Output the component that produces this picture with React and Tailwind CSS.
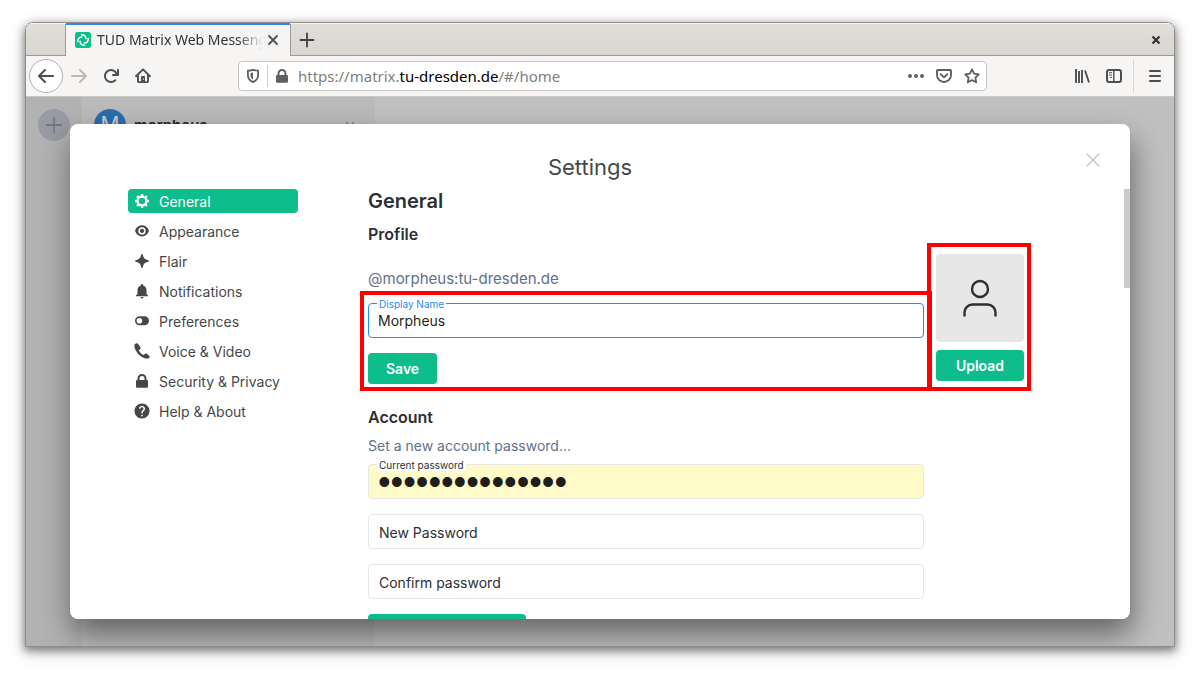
import React from "react";
import { MdHelp, MdNotifications } from "react-icons/md";
import { FaPhoneAlt } from "react-icons/fa";

function Glyph({ size = 16, children, className = "" }) {
  return (
    <svg
      width={size}
      height={size}
      viewBox="0 0 16 16"
      fill="currentColor"
      aria-hidden="true"
      className={`shrink-0 ${className}`}
    >
      {children}
    </svg>
  );
}

const arrowPath =
  "M15 7H3.414l4.293-4.293a1 1 0 0 0-1.414-1.414l-6 6a1 1 0 0 0 0 1.414l6 6a1 1 0 0 0 1.414-1.414L3.414 9H15a1 1 0 0 0 0-2z";

function Padlock({ className = "" }) {
  return (
    <Glyph className={className}>
      <path
        fillRule="evenodd"
        d="M3.5 7V5.5a4.5 4.5 0 0 1 9 0V7h.5a1 1 0 0 1 1 1v5.500a1.300 1.300 0 0 1-1.300 1.300H3.300A1.300 1.300 0 0 1 2 13.500V8a1 1 0 0 1 1-1zM5.500 7h5V5.500a2.500 2.500 0 0 0-5 0z"
      />
    </Glyph>
  );
}

function TabBar() {
  return (
    <div className="flex h-[33px] shrink-0 border-t border-t-[#f6f5f4] bg-linear-to-b from-[#e1deda] to-[#d9d5d0]">
      <div className="w-10 border-r border-b border-[#9c9a97]" />
      <div className="-mt-px flex w-[224px] items-center border-t-2 border-t-[#3584e4] bg-[#f6f5f4] pr-[11px] pb-0.5 pl-[9px]">
        <svg width="16" height="16" viewBox="0 0 16 16" fill="none" aria-hidden="true" className="shrink-0">
          <rect width="16" height="16" rx="2.5" fill="#0dbd8b" />
          <g stroke="#fff" strokeWidth="1.5" strokeLinecap="round">
            <path d="M6.500 2.700c2.600 0 4.500 1.600 4.500 4.100" />
            <path d="M13.300 6.500c0 2.600-1.600 4.500-4.100 4.500" />
            <path d="M9.500 13.300c-2.600 0-4.500-1.600-4.500-4.100" />
            <path d="M2.700 9.500c0-2.600 1.600-4.500 4.100-4.500" />
          </g>
        </svg>
        <span className="ml-1.5 flex-1 overflow-hidden mask-r-from-85% text-sm leading-5 whitespace-nowrap text-[#2e3436]">
          TUD Matrix Web Messenger
        </span>
        <button type="button" aria-label="Close tab" className="ml-1 text-[#4a4f51]">
          <svg width="12" height="12" viewBox="0 0 12 12" aria-hidden="true">
            <path d="M2 2l8 8M10 2l-8 8" stroke="currentColor" strokeWidth="1.8" strokeLinecap="round" />
          </svg>
        </button>
      </div>
      <div className="flex flex-1 items-center justify-between border-b border-l border-[#9c9a97] pr-3 pl-2">
        <button type="button" aria-label="New tab" className="text-[#3d4244]">
          <Glyph>
            <path d="M8 1.500v13M1.500 8h13" stroke="currentColor" strokeWidth="1.800" strokeLinecap="round" />
          </Glyph>
        </button>
        <button type="button" aria-label="Close window" className="text-[#2e3436]">
          <svg width="12" height="12" viewBox="0 0 12 12" aria-hidden="true">
            <path d="M2.500 2.500l7 7M9.500 2.500l-7 7" stroke="currentColor" strokeWidth="2.200" />
          </svg>
        </button>
      </div>
    </div>
  );
}

function Toolbar() {
  return (
    <div className="flex h-[41px] shrink-0 items-center border-b border-[#cdc7c2] bg-[#f6f5f4] pl-[3px] text-[#4a4f51]">
      <button
        type="button"
        aria-label="Back"
        className="flex size-[34px] items-center justify-center rounded-full border border-[#b5b2ae] bg-white"
      >
        <Glyph>
          <path d={arrowPath} />
        </Glyph>
      </button>
      <button type="button" aria-label="Forward" className="ml-2 text-[#b9b8b6]">
        <Glyph className="rotate-180">
          <path d={arrowPath} />
        </Glyph>
      </button>
      <button type="button" aria-label="Reload" className="ml-4">
        <Glyph>
          <path d="M15 1a1 1 0 0 0-1 1v2.418A6.995 6.995 0 1 0 8 15a6.954 6.954 0 0 0 4.950-2.050 1 1 0 0 0-1.414-1.414A5.019 5.019 0 1 1 12.549 6H10a1 1 0 0 0 0 2h5a1 1 0 0 0 1-1V2a1 1 0 0 0-1-1z" />
        </Glyph>
      </button>
      <button type="button" aria-label="Home" className="ml-4">
        <Glyph>
          <path
            d="M1 8.200L8 1.400l7 6.800M3 7.500V13.200a.9.9 0 0 0 .9.900h8.200a.9.9 0 0 0 .9-.9V7.500"
            fill="none"
            stroke="currentColor"
            strokeWidth="1.900"
            strokeLinecap="round"
            strokeLinejoin="round"
          />
          <path fillRule="evenodd" d="M6 9a1 1 0 0 1 1-1h2a1 1 0 0 1 1 1v5H6zM8 10.400v1.400h1v-1.400z" />
        </Glyph>
      </button>

      <div className="mx-[87px] flex h-[30px] flex-1 items-center rounded border border-[#c9c5c1] bg-white px-1.5 text-[#5f6061]">
        <Glyph>
          <path
            d="M8 1.900c1.800.6 3.500.8 5.100.8v4.400c0 3.500-2 5.700-5.100 7-3.100-1.300-5.100-3.500-5.100-7V2.700c1.600 0 3.300-.2 5.100-.8z"
            fill="none"
            stroke="currentColor"
            strokeWidth="1.800"
            strokeLinejoin="round"
          />
          <path d="M8 4.500v7C6.300 10.500 5.500 9 5.500 7.200V5.100C6.400 5 7.200 4.800 8 4.500z" />
        </Glyph>
        <span className="ml-1.5 h-[22px] w-px bg-[#cfcdca]" />
        <Padlock className="ml-1.5" />
        <div className="ml-2 flex-1 text-[15px] leading-5 whitespace-nowrap text-[#7f7f7f]">
          https://matrix.<span className="text-black">tu-dresden.de</span>/#/home
        </div>
        <button type="button" aria-label="Page actions">
          <Glyph>
            <circle cx="2" cy="8" r="2" />
            <circle cx="8" cy="8" r="2" />
            <circle cx="14" cy="8" r="2" />
          </Glyph>
        </button>
        <button type="button" aria-label="Save to Pocket" className="ml-3">
          <Glyph>
            <path
              d="M1.700 2h12.600a.7.7 0 0 1 .7.700V7A7 7 0 0 1 1 7V2.700a.7.700 0 0 1 .7-.7zM4.700 6.300L8 9.400l3.300-3.100"
              fill="none"
              stroke="currentColor"
              strokeWidth="1.900"
              strokeLinecap="round"
              strokeLinejoin="round"
            />
          </Glyph>
        </button>
        <button type="button" aria-label="Bookmark this page" className="ml-3">
          <Glyph>
            <path
              d="M8 1.300l2.100 4.300 4.700.7-3.400 3.300.8 4.700L8 12.100l-4.200 2.200.8-4.700L1.200 6.300l4.700-.7z"
              fill="none"
              stroke="currentColor"
              strokeWidth="1.800"
              strokeLinejoin="round"
            />
          </Glyph>
        </button>
      </div>

      <button type="button" aria-label="Library">
        <Glyph>
          <path d="M2 1v14M5 3v12M8 2v13M11 2.500l4 12" stroke="currentColor" strokeWidth="1.900" />
        </Glyph>
      </button>
      <button type="button" aria-label="Sidebars" className="ml-4">
        <Glyph>
          <rect x="1" y="2" width="14" height="12" rx="2" fill="none" stroke="currentColor" strokeWidth="2" />
          <path d="M7.800 2v12" stroke="currentColor" strokeWidth="1.400" />
          <path d="M3 4.700h3M3 7h3M4 9.400h2" stroke="currentColor" strokeWidth="1" />
        </Glyph>
      </button>
      <span className="ml-[11px] h-[34px] w-px bg-[#d9d7d4]" />
      <button type="button" aria-label="Open menu" className="mr-[11px] ml-[13px]">
        <Glyph>
          <path d="M3 3h10M3 8h10M3 13h10" stroke="currentColor" strokeWidth="2" strokeLinecap="round" />
        </Glyph>
      </button>
    </div>
  );
}

function Backdrop() {
  return (
    <div className="flex flex-1 bg-[#c0c0c0]">
      <div className="w-14 bg-[#b2b2b2] pt-3 pl-3">
        <div className="flex size-8 items-center justify-center rounded-full bg-[#989ba2] text-[#6a6f7a]">
          <Glyph>
            <path d="M8 0v16M0 8h16" stroke="currentColor" strokeWidth="1.300" />
          </Glyph>
        </div>
      </div>
      <div className="flex w-[293px] items-start bg-[#bababa] pt-3 pr-5 pl-3">
        <div className="flex size-8 items-center justify-center rounded-full bg-[#2b6cab] text-[21px] text-[#c4cdd6]">
          M
        </div>
        <div className="ml-2 flex-1 text-[15px] leading-[34px] font-semibold text-[#232528]">morpheus</div>
        <Glyph size={10} className="mt-3 text-[#777]">
          <path d="M2 2l6 6 6-6" fill="none" stroke="currentColor" strokeWidth="2" />
        </Glyph>
      </div>
    </div>
  );
}

const sections = [
  {
    name: "General",
    icon: (
      <Glyph>
        <circle cx="8" cy="8" r="4.400" fill="none" stroke="currentColor" strokeWidth="2.200" />
        <path
          d="M8 1v2M8 13v2M1 8h2M13 8h2M3.050 3.050l1.400 1.400M11.550 11.550l1.400 1.400M3.050 12.950l1.400-1.400M11.550 4.450l1.400-1.400"
          stroke="currentColor"
          strokeWidth="2.400"
        />
      </Glyph>
    ),
  },
  {
    name: "Appearance",
    icon: (
      <Glyph>
        <path
          fillRule="evenodd"
          d="M8 2.300c3.200 0 5.800 1.900 7 5.500-1.200 3.700-3.800 5.600-7 5.600S2.200 11.500 1 7.800c1.200-3.600 3.800-5.500 7-5.500zM8 4.200a3.700 3.700 0 1 0 0 7.400 3.700 3.700 0 0 0 0-7.400z"
        />
        <circle cx="8" cy="7.900" r="2.100" />
      </Glyph>
    ),
  },
  {
    name: "Flair",
    icon: (
      <Glyph>
        <path d="M8 1c.5 0 .7.400.8.800.5 3.200 1.900 4.600 5.400 5.400.4.100.8.300.8.800s-.4.700-.8.800c-3.500.8-4.900 2.200-5.400 5.400-.1.400-.3.800-.8.800s-.7-.4-.8-.8C6.700 11 5.300 9.600 1.800 8.800 1.400 8.700 1 8.500 1 8s.4-.7.8-.8c3.500-.8 4.900-2.200 5.400-5.400.1-.4.300-.8.8-.8z" />
      </Glyph>
    ),
  },
  { name: "Notifications", icon: <MdNotifications size={18} className="-m-px" aria-hidden="true" /> },
  {
    name: "Preferences",
    icon: (
      <Glyph>
        <path
          fillRule="evenodd"
          d="M5.500 3.300h5a4.500 4.500 0 0 1 0 9h-5a4.500 4.500 0 0 1 0-9zM5.400 5a2.800 2.800 0 1 0 0 5.600 2.800 2.800 0 0 0 0-5.600z"
        />
      </Glyph>
    ),
  },
  {
    name: "Voice & Video",
    icon: (
      <Glyph>
        <path d="M1.200.8C.5 1.300.2 2.300.4 3.600c.4 2.600 2 5.500 4.300 7.800s5.200 3.900 7.700 4.200c1.300.2 2.300-.2 2.800-.9.500-.6.600-1.200.1-1.700l-2.400-2.200c-.6-.5-1.200-.5-1.800 0l-1.200 1c-.3.200-.6.200-1 0-1.500-1-2.800-2.300-3.800-3.900-.2-.3-.2-.6.100-.9l1-1.100c.5-.6.6-1.200.1-1.800L4.200.9C3.400-.1 2.200 0 1.200.8z" />
      </Glyph>
    ),
  },
  { name: "Security & Privacy", icon: <Padlock /> },
  { name: "Help & About", icon: <MdHelp size={18} className="-m-px" aria-hidden="true" /> },
];

function SectionNav() {
  return (
    <nav className="flex w-[170px] shrink-0 flex-col gap-1.5">
      {sections.map(({ name, icon }, index) => (
        <button
          key={name}
          type="button"
          aria-current={index === 0 ? "page" : undefined}
          className={`flex h-6 items-center gap-[9px] rounded pl-1.5 text-sm ${
            index === 0 ? "bg-[#0dbd8b] text-white" : "text-[#45474a]"
          }`}
        >
          {icon}
          <span className="pt-0.5 whitespace-nowrap">{name}</span>
        </button>
      ))}
    </nav>
  );
}

const fieldLook = {
  focused: {
    input: "border-[#238cf5] bg-white text-sm",
    label: "-top-[5px] bg-white text-[10px] leading-3 text-[#238cf5]",
  },
  autofilled: {
    input: "border-[#e7e7e7] bg-[#fffbc8] font-['Liberation_Sans',sans-serif] text-4xl",
    label: "-top-[5px] bg-white text-[10px] leading-3 text-[#2e2f32]",
  },
  empty: {
    input: "border-[#e7e7e7] bg-white text-sm",
    label: "top-[9px] text-sm leading-5 text-[#2e2f32]",
  },
};

function Field({ id, label, look, type = "text", value = "" }) {
  return (
    <div className="relative flex">
      <input
        id={id}
        type={type}
        defaultValue={value}
        className={`h-[35px] min-w-0 flex-1 rounded border px-[9px] text-[#1f1e1a] outline-none ${fieldLook[look].input}`}
      />
      <label htmlFor={id} className={`absolute left-[9px] px-0.5 ${fieldLook[look].label}`}>
        {label}
      </label>
    </div>
  );
}

function PrimaryButton({ children, className = "" }) {
  return (
    <button
      type="button"
      className={`h-[31px] rounded bg-[#0dbd8b] px-[18px] text-sm font-semibold text-white ${className}`}
    >
      {children}
    </button>
  );
}

function SettingsDialog() {
  return (
    <section
      role="dialog"
      aria-labelledby="settings-title"
      className="flex flex-1 flex-col overflow-hidden rounded-lg bg-white shadow-[2px_15px_30px_0_rgba(0,0,0,0.48)]"
    >
      <header className="flex h-[65px] shrink-0 items-start pt-[29px] pr-[30px] pl-6">
        <h1 id="settings-title" className="flex-1 text-center text-[22px] leading-7 text-[#45474a]">
          Settings
        </h1>
        <button type="button" aria-label="Close settings" className="text-[#c1c1c1]">
          <svg width="14" height="14" viewBox="0 0 14 14" aria-hidden="true">
            <path d="M.5.5l13 13M13.500.5l-13 13" stroke="currentColor" strokeWidth="1.200" />
          </svg>
        </button>
      </header>
      <div className="flex min-h-0 flex-1 pl-[58px]">
        <SectionNav />
        <div className="ml-[62px] h-0 min-h-full flex-1 overflow-hidden pr-[100px] pl-2 text-[#2e2f32]">
          <h2 className="text-xl leading-6 font-semibold">General</h2>
          <h3 className="mt-[9px] text-base leading-6 font-semibold">Profile</h3>
          <div className="mt-2 flex gap-3">
            <div className="flex-1 pt-[15px]">
              <p className="text-[15px] leading-5 text-[#61708b]">@morpheus:tu-dresden.de</p>
              <form className="relative mt-3.5">
                <Field id="display-name" label="Display Name" look="focused" value="Morpheus" />
                <PrimaryButton className="mt-[15px]">Save</PrimaryButton>
                <div className="pointer-events-none absolute -top-3 -right-2 -bottom-[7px] -left-2 border-4 border-[#ff0000]" />
              </form>
            </div>
            <div className="relative flex w-[88px] flex-col gap-2 self-start">
              <div className="flex size-[88px] items-center justify-center rounded bg-[#e7e7e7]">
                <svg
                  width="36"
                  height="40"
                  viewBox="0 0 36 40"
                  fill="none"
                  stroke="#2e2f32"
                  strokeWidth="2.400"
                  aria-hidden="true"
                >
                  <circle cx="18" cy="11" r="8" />
                  <path d="M2.500 37.500v-3a8 8 0 0 1 8-8h15a8 8 0 0 1 8 8v3" strokeLinecap="round" />
                </svg>
              </div>
              <PrimaryButton>Upload</PrimaryButton>
              <div className="pointer-events-none absolute -top-[11px] -right-[7px] -bottom-2.5 -left-[9px] border-4 border-[#ff0000]" />
            </div>
          </div>
          <div className="mr-[100px]">
            <h3 className="mt-[21px] text-base leading-6 font-semibold">Account</h3>
            <p className="mt-[7px] text-sm leading-5 text-[#61708b]">Set a new account password...</p>
            <form className="mt-2 flex flex-col gap-[15px]">
              <Field
                id="current-password"
                label="Current password"
                look="autofilled"
                type="password"
                value="followthewhite1"
              />
              <Field id="new-password" label="New Password" look="empty" type="password" />
              <Field id="confirm-password" label="Confirm password" look="empty" type="password" />
              <PrimaryButton className="self-start">Change Password</PrimaryButton>
            </form>
          </div>
        </div>
        <div className="w-1.5 shrink-0">
          <div className="h-[99px] bg-[#cbcbcb]" />
        </div>
      </div>
    </section>
  );
}

export default function App() {
  return (
    <div className="flex min-h-screen flex-col bg-white px-[25px] pt-[22px] pb-7 font-['Noto_Sans',sans-serif]">
      <div className="flex flex-1 flex-col overflow-hidden rounded-t-lg border border-[#8e8d8c] shadow-[0_3px_9px_1px_rgba(0,0,0,0.45),0_6px_20px_rgba(0,0,0,0.15)]">
        <TabBar />
        <Toolbar />
        <main className="relative flex flex-1 overflow-hidden font-['Inter',sans-serif]">
          <Backdrop />
          <div className="absolute inset-0 flex px-11 py-[27px]">
            <SettingsDialog />
          </div>
        </main>
      </div>
    </div>
  );
}
